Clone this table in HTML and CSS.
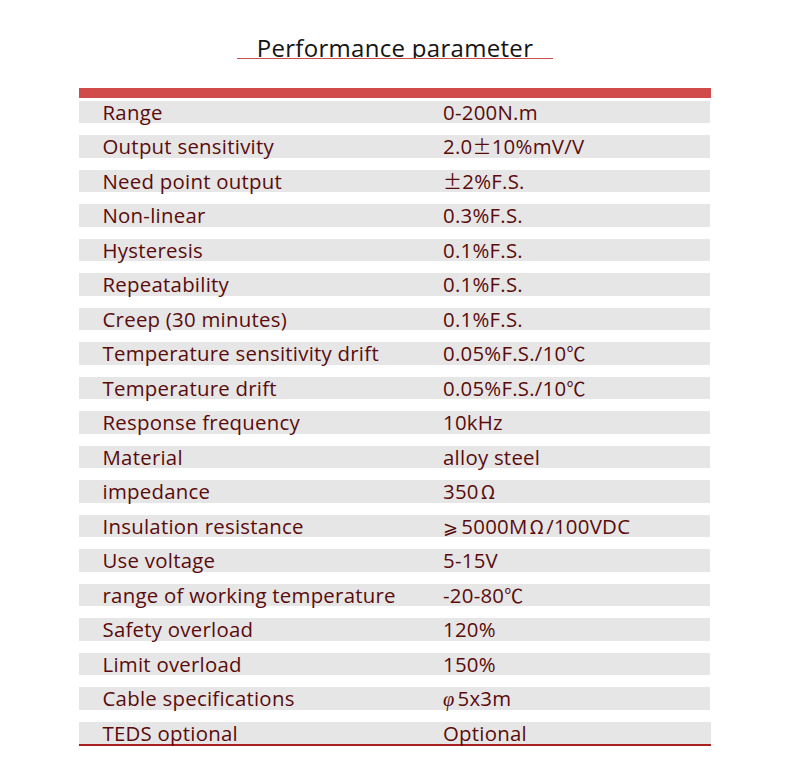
FILE: index.html
```html
<!DOCTYPE html>
<html lang="en">
<head>
<meta charset="utf-8">
<title>Performance parameter</title>
<link rel="stylesheet" href="styles.css">
</head>
<body>
<div class="page">
  <div class="title-wrap">
    <h1 class="title">Performance parameter</h1>
  </div>
  <div class="table">
    <div class="head-bar"></div>
    <div class="rows">
      <div class="row"><span class="k">Range</span><span class="v">0-200N.m</span></div>
      <div class="row"><span class="k">Output sensitivity</span><span class="v">2.0<span class="cjk">±</span>10%mV/V</span></div>
      <div class="row"><span class="k">Need point output</span><span class="v"><span class="cjk">±</span>2%F.S.</span></div>
      <div class="row"><span class="k">Non-linear</span><span class="v">0.3%F.S.</span></div>
      <div class="row"><span class="k">Hysteresis</span><span class="v">0.1%F.S.</span></div>
      <div class="row"><span class="k">Repeatability</span><span class="v">0.1%F.S.</span></div>
      <div class="row"><span class="k">Creep (30 minutes)</span><span class="v">0.1%F.S.</span></div>
      <div class="row"><span class="k">Temperature sensitivity drift</span><span class="v">0.05%F.S./10<span class="cjk">℃</span></span></div>
      <div class="row"><span class="k">Temperature drift</span><span class="v">0.05%F.S./10<span class="cjk">℃</span></span></div>
      <div class="row"><span class="k">Response frequency</span><span class="v">10kHz</span></div>
      <div class="row"><span class="k">Material</span><span class="v">alloy steel</span></div>
      <div class="row"><span class="k">impedance</span><span class="v">350<span class="cjk om">Ω</span></span></div>
      <div class="row"><span class="k">Insulation resistance</span><span class="v"><span class="sym">⩾</span>5000M<span class="cjk om">Ω</span>/100VDC</span></div>
      <div class="row"><span class="k">Use voltage</span><span class="v">5-15V</span></div>
      <div class="row"><span class="k">range of working temperature</span><span class="v">-20-80<span class="cjk">℃</span></span></div>
      <div class="row"><span class="k">Safety overload</span><span class="v">120%</span></div>
      <div class="row"><span class="k">Limit overload</span><span class="v">150%</span></div>
      <div class="row"><span class="k">Cable specifications</span><span class="v"><span class="phi">φ</span>5x3m</span></div>
      <div class="row last"><span class="k">TEDS optional</span><span class="v">Optional</span></div>
    </div>
  </div>
</div>
</body>
</html>
```
FILE: styles.css
```css
html, body {
  margin: 0;
  padding: 0;
  background: #ffffff;
}

.page {
  width: 790px;
  min-height: 761px;
  padding-top: 35.5px;
  box-sizing: border-box;
  font-family: "Open Sans", "Noto Sans", sans-serif;
}

.title-wrap {
  width: 316px;
  margin: 0 auto;
  height: 22.5px;
  overflow: hidden;
  border-bottom: 1px solid #c9504e;
}

.title {
  margin: 0;
  font-size: 24px;
  line-height: 24px;
  letter-spacing: 0.3px;
  font-weight: 400;
  color: #141414;
  text-align: center;
}

.table {
  width: 632px;
  margin: 29px 0 0 79px;
}

.head-bar {
  height: 10px;
  background: #d04b4a;
}

.rows {
  display: flex;
  flex-direction: column;
  gap: 12px;
  padding-top: 2.5px;
}

.row {
  display: flex;
  height: 22.5px;
  background: #e6e6e6;
  margin-right: 1px;
  font-size: 20.4px;
  line-height: 22.5px;
  letter-spacing: 0.25px;
  font-weight: 500;
  color: #5a0b0b;
  white-space: nowrap;
}

.row.last {
  border-bottom: 2px solid #a8201f;
  margin-right: 0;
}

.k {
  width: 340.5px;
  padding-left: 23.5px;
}

.v {
  flex: 1;
}

.cjk {
  font-family: "Noto Sans CJK SC", sans-serif;
  font-size: 19px;
  font-weight: 400;
}

.om {
  padding: 0 2px;
}

.sym {
  font-family: "DejaVu Sans", "Noto Sans CJK SC", sans-serif;
  font-size: 18px;
  font-weight: 400;
  padding-right: 3px;
}

.phi {
  font-family: "Liberation Serif", serif;
  font-style: italic;
  font-weight: 400;
  padding-right: 3px;
}
```
